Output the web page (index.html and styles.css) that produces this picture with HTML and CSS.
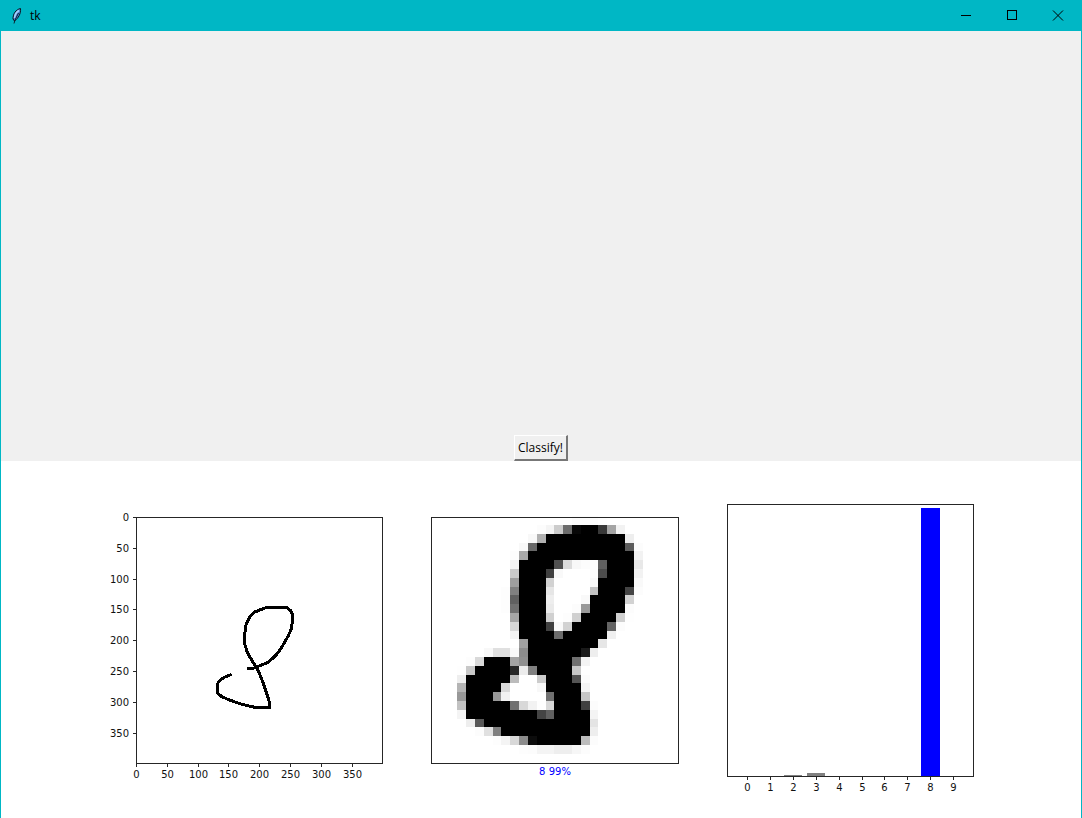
FILE: index.html
```html
<!DOCTYPE html>
<html lang="en">
<head>
<meta charset="utf-8">
<title>tk</title>
<link rel="stylesheet" href="styles.css">
</head>
<body>
<div class="window">
  <header class="titlebar">
    <svg class="feather" width="16" height="18" viewBox="0 0 16 18" aria-hidden="true">
      <path d="M11.5 1.5C7 2.5 4 6.500 4 12L5.500 14C9.500 11 12 6.500 11.500 1.500Z" fill="#4f86d8" stroke="#0b1420" stroke-width="1"/>
      <path d="M10 3.500C7.500 5 5.800 8 5.500 11" fill="none" stroke="#a9d2fa" stroke-width="1.600"/>
      <path d="M9.500 6L6 13L5 16.500" fill="none" stroke="#0b1420" stroke-width="0.900"/>
    </svg>
    <h1 class="title">tk</h1>
    <div class="controls">
      <button class="control" type="button" aria-label="Minimize"><svg width="12" height="12" viewBox="0 0 12 12"><path d="M1 5.500H11"/></svg></button>
      <button class="control" type="button" aria-label="Maximize"><svg width="12" height="12" viewBox="0 0 12 12"><path d="M1.500 0.500H10.500V9.500H1.500Z"/></svg></button>
      <button class="control" type="button" aria-label="Close"><svg class="smooth" width="12" height="12" viewBox="0 0 12 12"><path d="M1 0.500L11 10.500M11 0.500L1 10.500"/></svg></button>
    </div>
  </header>
  <main class="content">
    <section class="drawing"><button class="classify" type="button">Classify!</button></section>
    <section class="figure">
      <svg class="plot" width="280" height="300" viewBox="0 0 280 300" role="img" aria-label="Drawn digit">
        <g transform="translate(99 95) scale(0.33333)">
          <path class="ink" d="M126 220H145L164 212L188 203L203 190L216 177L228 161L238 143L250 122L259 102L261 88L263 76V58L257 47L246 38H183L164 45L147 52L138 61L132 70L122 92L119 120L120 150L128 175L145 203L156 220L165 240L173 260L184 292L195 327L193 338L150 337L111 328L70 314L49 304L37 293V267L45 255L60 246L80 238"/>
        </g>
        <rect class="frame" x="30.500" y="17.500" width="246" height="246"/>
        <g id="image-axis"></g>
      </svg>
      <svg class="plot" width="254" height="300" viewBox="0 0 254 300" role="img" aria-label="Scaled digit, classified as 8">
        <g id="pixels"></g>
        <rect class="frame" x="3.500" y="17.500" width="247" height="246"/>
        <text class="result" x="127" y="275">8 99%</text>
      </svg>
      <svg class="plot" width="252" height="300" viewBox="0 0 252 300" role="img" aria-label="Class probabilities">
        <rect class="bar" x="60" y="275" width="18" height="1"/>
        <rect class="bar" x="83" y="273" width="18" height="3"/>
        <rect class="bar best" x="197" y="8" width="19" height="268"/>
        <rect class="frame" x="3.500" y="4.500" width="246" height="272"/>
        <g id="class-axis"></g>
      </svg>
    </section>
  </main>
</div>
<script src="plots.js"></script>
</body>
</html>
```
FILE: styles.css
```css
* { box-sizing: border-box; }
body { margin: 0; }
.window {
  display: flex;
  flex-direction: column;
  min-height: 100vh;
  background: #f0f0f0;
  border: solid #00b7c5;
  border-width: 0 1px;
}
.titlebar {
  display: flex;
  align-items: center;
  height: 31px;
  padding-left: 8px;
  background: #00b7c5;
  color: #000;
}
.title {
  margin: 0 0 0 5px;
  font: 400 12px/18px "Open Sans", "Noto Sans", sans-serif;
}
.controls { display: flex; height: 100%; margin-left: auto; }
.control {
  display: flex;
  align-items: center;
  justify-content: center;
  width: 46px;
  padding: 0;
  border: 0;
  background: none;
}
.control svg {
  fill: none;
  stroke: #000;
  stroke-width: 1px;
  shape-rendering: crispEdges;
}
.control .smooth { shape-rendering: auto; }
.content { display: flex; flex: 1; flex-direction: column; }
.drawing {
  display: flex;
  flex: 1;
  align-items: flex-end;
  justify-content: center;
}
.classify {
  height: 26px;
  padding: 0 3px;
  border: solid;
  border-width: 1px 2px 2px 1px;
  border-color: #fff #777 #777 #fff;
  background: #f0f0f0;
  color: #000;
  font: 12px/18px "Open Sans", "Noto Sans", sans-serif;
}
.figure {
  display: flex;
  justify-content: center;
  gap: 42px;
  padding: 39px 0 18px;
  background: #fff;
}
.plot {
  flex: none;
  font: 10px "DejaVu Sans", sans-serif;
  fill: #111;
  text-anchor: middle;
}
.frame, .tick {
  fill: none;
  stroke: #262626;
  stroke-width: 1px;
  shape-rendering: crispEdges;
}
.row-label { text-anchor: end; }
.ink { fill: none; stroke: #000; stroke-width: 9px; shape-rendering: crispEdges; }
.result { fill: #00f; }
.bar { fill: #808080; shape-rendering: crispEdges; }
.best { fill: #00f; }
.pixel { shape-rendering: crispEdges; }
```
FILE: plots.js
```js
function add(parent, name, attributes, text) {
  const node = document.createElementNS("http://www.w3.org/2000/svg", name);
  for (const key in attributes) node.setAttribute(key, attributes[key]);
  if (text !== undefined) node.textContent = text;
  parent.appendChild(node);
}

// Each row: first column, then one grey level (hex) per cell; "N*" repeats black N times.
const rows = [
  "16 fc fc fc fe",
  "12 fc f4 cc 6c 08 2* 38 a4 f2",
  "11 f8 b0 9* ee",
  "10 f8 68 10* 5c fc",
  "9 fd a8 12* f2",
  "9 f2 4* 50 dc f8 fc fc 60 3* e8",
  "9 ca 3* 40 f9 ff ff ff fc 4c 3* f2",
  "9 9e 3* d2 ff ff ff ff f8 4* f9",
  "8 fd 80 3* e6 ff ff ff ff c2 3* 44 fc",
  "8 fd 60 3* ee ff ff ff f9 4* d2",
  "8 fd 70 3* ea ff ff fc 99 4* fc",
  "9 a6 3* d0 ff fd d0 4* d0 fe",
  "9 d8 3* 40 f9 d2 4* 64 fc",
  "9 f4 4* 6c 5* f0",
  "10 a0 8* e6",
  "6 f8 e0 e0 fa 8c 6* 1a ee",
  "4 fd d9 3* a4 90 5* 70 f4",
  "3 fe c8 4* 28 ec 80 4* c8",
  "3 ee 5* bc ff ff cc 3* 54 fc",
  "3 b4 4* d8 ff ff ff f8 4* f4",
  "3 98 3* 98 f2 ff ff ff ff 70 3* c6",
  "3 c2 5* 70 d8 f2 fe d8 3* 40 fc",
  "3 f4 8* 44 60 4* f4",
  "4 ee 58 12* e4",
  "5 fc e0 80 10* ee",
  "7 fd f4 d8 8c 0c 5* bc fc",
  "10 fd fc f4 f4 ee ee f6 fc"
];

const pixels = document.getElementById("pixels");
const edgeX = column => Math.round(2.9 + column * 8.82);
const edgeY = row => Math.round(16.2 + row * 8.8);
rows.forEach((row, r) => {
  const [start, ...cells] = row.split(" ");
  let column = Number(start);
  for (const cell of cells) {
    const run = cell.endsWith("*") ? parseInt(cell, 10) : 1;
    const level = cell.endsWith("*") ? "00" : cell;
    add(pixels, "rect", {
      class: "pixel",
      x: edgeX(column),
      y: edgeY(r),
      width: edgeX(column + run) - edgeX(column),
      height: edgeY(r + 1) - edgeY(r),
      fill: "#" + level.repeat(3)
    });
    column += run;
  }
});

const imageAxis = document.getElementById("image-axis");
for (let i = 0; i < 8; i++) {
  const x = Math.round(30 + i * 30.8) + 0.5;
  const y = Math.round(17 + i * 30.8) + 0.5;
  add(imageAxis, "path", { class: "tick", d: `M${x} 264v3M30 ${y}h-3` });
  add(imageAxis, "text", { x, y: 278 }, i * 50);
  add(imageAxis, "text", { class: "row-label", x: 23, y: y + 3.5 }, i * 50);
}

const classAxis = document.getElementById("class-axis");
for (let i = 0; i < 10; i++) {
  const x = Math.round(23 + i * 22.9) + 0.5;
  add(classAxis, "path", { class: "tick", d: `M${x} 277v3` });
  add(classAxis, "text", { x, y: 291 }, i);
}
```
